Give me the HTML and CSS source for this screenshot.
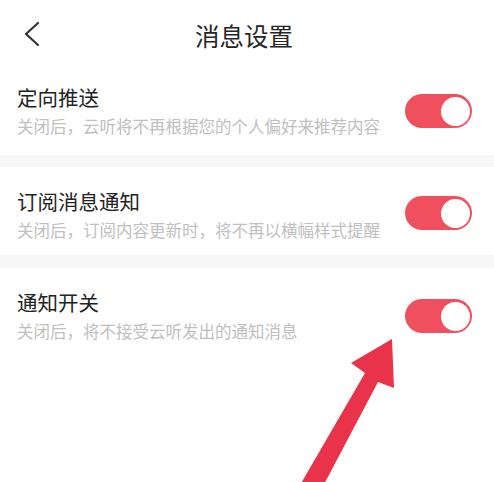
FILE: index.html
```html
<!DOCTYPE html>
<html lang="zh-CN">
<head>
<meta charset="utf-8">
<title>消息设置</title>
<link rel="stylesheet" href="styles.css">
</head>
<body>
<div class="page">
  <header class="header">
    <svg class="back" width="16" height="26" viewBox="0 0 16 26"><polyline points="14,2 2,13 14,24" fill="none" stroke="#333" stroke-width="2.2" stroke-linecap="round" stroke-linejoin="round"/></svg>
    <h1 class="title">消息设置</h1>
  </header>
  <section class="row row-first">
    <div class="text">
      <div class="name">定向推送</div>
      <div class="desc">关闭后，云听将不再根据您的个人偏好来推荐内容</div>
    </div>
    <span class="toggle"><span class="knob"></span></span>
  </section>
  <div class="sep"></div>
  <section class="row row-second">
    <div class="text">
      <div class="name">订阅消息通知</div>
      <div class="desc">关闭后，订阅内容更新时，将不再以横幅样式提醒</div>
    </div>
    <span class="toggle"><span class="knob"></span></span>
  </section>
  <div class="sep sep-2"></div>
  <section class="row">
    <div class="text">
      <div class="name">通知开关</div>
      <div class="desc">关闭后，将不接受云听发出的通知消息</div>
    </div>
    <span class="toggle"><span class="knob"></span></span>
  </section>
  <svg class="arrow" width="494" height="482" viewBox="0 0 494 482">
    <polygon points="296,492 320,492 378,382 394,388 392,339 351,363 365,373" fill="#e8334a"/>
  </svg>
</div>
</body>
</html>
```
FILE: styles.css
```css
html, body {
  margin: 0;
  padding: 0;
  background: #fff;
}
body {
  width: 494px;
  height: 482px;
  overflow: hidden;
  font-family: "Noto Sans CJK SC", "Noto Sans", sans-serif;
}
.page {
  position: relative;
  width: 494px;
  height: 482px;
}
.header {
  height: 63px;
  display: flex;
  align-items: flex-start;
  justify-content: center;
  position: relative;
}
.back {
  position: absolute;
  left: 24px;
  top: 21px;
}
.title {
  margin: 21px 0 0 -6px;
  font-size: 24.5px;
  font-weight: 400;
  line-height: 30px;
  color: #262626;
}
.row {
  display: flex;
  align-items: center;
  justify-content: space-between;
  padding: 22px 22px 14px 17px;
  height: 52px;
}
.row-first {
  padding-top: 22px;
  padding-bottom: 18px;
}
.text {
  display: flex;
  flex-direction: column;
  gap: 6px;
}
.name {
  font-size: 20.5px;
  line-height: 24px;
  color: #222;
}
.desc {
  font-size: 16.5px;
  line-height: 22px;
  color: #c0c0c0;
  white-space: nowrap;
}
.toggle {
  width: 67px;
  height: 34px;
  border-radius: 17px;
  background: #f0505e;
  display: flex;
  align-items: center;
  justify-content: flex-end;
  padding-right: 2px;
  box-sizing: border-box;
  margin-top: 0;
}
.row-second .toggle {
  margin-top: -4px;
}
.knob {
  width: 29px;
  height: 29px;
  border-radius: 50%;
  background: #fff;
}
.sep {
  height: 12px;
  background: #f7f7f7;
}
.sep-2 {
  height: 13px;
}
.arrow {
  position: absolute;
  left: 0;
  top: 0;
}
```
